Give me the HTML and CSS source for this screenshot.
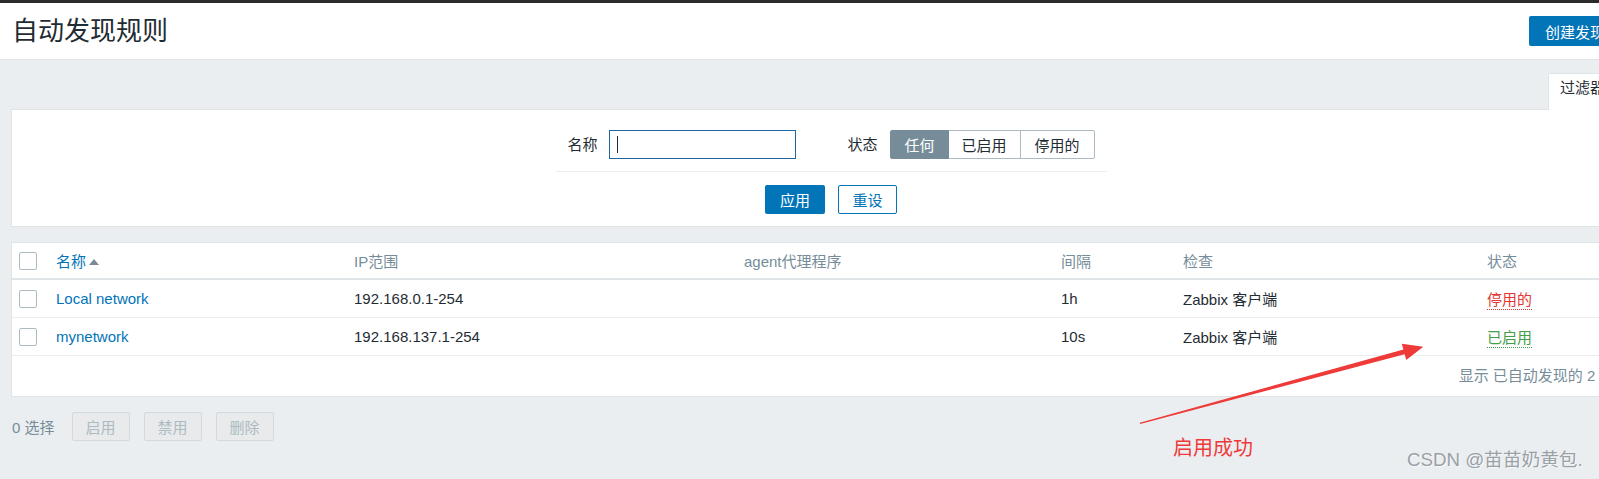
FILE: index.html
```html
<!DOCTYPE html>
<html lang="zh-CN">
<head>
    <meta charset="UTF-8">
    <title>自动发现规则</title>
    <link rel="stylesheet" href="styles.css">
</head>
<body>
    <div class="page">
        <div class="topbar"></div>
        <header class="page-header">
            <h1>自动发现规则</h1>
            <button class="btn-create">创建发现规则</button>
        </header>

        <main class="content">
            <div class="filter-tabs">
                <span class="filter-tab">过滤器</span>
            </div>
            <div class="filter-box">
                <div class="filter-row">
                    <div class="filter-field">
                        <label>名称</label>
                        <div class="text-input"><span class="caret"></span></div>
                    </div>
                    <div class="filter-field">
                        <label>状态</label>
                        <div class="radio-group">
                            <span class="radio selected">任何</span>
                            <span class="radio">已启用</span>
                            <span class="radio">停用的</span>
                        </div>
                    </div>
                </div>
                <div class="filter-buttons">
                    <button class="btn-apply">应用</button>
                    <button class="btn-reset">重设</button>
                </div>
            </div>

            <div class="list-box">
                <table class="list-table">
                    <colgroup>
                        <col style="width: 36px">
                        <col style="width: 298px">
                        <col style="width: 390px">
                        <col style="width: 317px">
                        <col style="width: 122px">
                        <col style="width: 304px">
                        <col>
                    </colgroup>
                    <thead>
                        <tr>
                            <th class="cell-check"><span class="checkbox"></span></th>
                            <th><a class="sort-link">名称</a><span class="sort-arrow"></span></th>
                            <th>IP范围</th>
                            <th>agent代理程序</th>
                            <th>间隔</th>
                            <th>检查</th>
                            <th>状态</th>
                        </tr>
                    </thead>
                    <tbody>
                        <tr>
                            <td class="cell-check"><span class="checkbox"></span></td>
                            <td><a class="link">Local network</a></td>
                            <td>192.168.0.1-254</td>
                            <td></td>
                            <td>1h</td>
                            <td>Zabbix 客户端</td>
                            <td><span class="status red">停用的</span></td>
                        </tr>
                        <tr>
                            <td class="cell-check"><span class="checkbox"></span></td>
                            <td><a class="link">mynetwork</a></td>
                            <td>192.168.137.1-254</td>
                            <td></td>
                            <td>10s</td>
                            <td>Zabbix 客户端</td>
                            <td><span class="status green">已启用</span></td>
                        </tr>
                    </tbody>
                </table>
                <div class="paging">显示 已自动发现的 2 中的 2</div>
            </div>

            <div class="actions">
                <span class="selected-count">0 选择</span>
                <button class="btn-disabled" disabled>启用</button>
                <button class="btn-disabled" disabled>禁用</button>
                <button class="btn-disabled" disabled>删除</button>
            </div>
        </main>
    </div>

    <!-- annotation drawn over the screenshot -->
    <svg class="annotation" width="1599" height="479" viewBox="0 0 1599 479">
        <polygon fill="#ef3a3a" points="1139.8,422.7 1403.4,349.5 1401.8,343.7 1423.3,346.7 1406.2,360.1 1404.7,354.3 1140.2,423.9"/>
    </svg>
    <div class="note">启用成功</div>
    <div class="watermark">CSDN @苗苗奶黄包.</div>
</body>
</html>
```

FILE: styles.css
```css
html {
    overflow: hidden;
}
body {
    margin: 0;
    width: 1599px;
    height: 479px;
    overflow: hidden;
    position: relative;
    background-color: #ebeef0;
    font-family: "Liberation Sans", "Noto Sans CJK SC", sans-serif;
    font-size: 15px;
    color: #1f2c33;
}
button {
    font-family: inherit;
    font-size: 15px;
}
.page {
    width: 1662px;
}
.topbar {
    height: 3px;
    background-color: #2b2b2b;
}
.page-header {
    display: flex;
    align-items: center;
    justify-content: space-between;
    height: 56px;
    padding: 0 11px 0 12px;
    background: white;
    border-bottom: 1px solid #dfe4e7;
}
.page-header h1 {
    margin: 0;
    font-size: 26px;
    font-weight: normal;
    line-height: 30px;
    color: #1f2c33;
}
.btn-create {
    height: 30px;
    padding: 0 16px;
    border: none;
    border-radius: 2px;
    background-color: #0275b8;
    color: white;
}
.content {
    padding: 13px 11px 0 11px;
}
.filter-tabs {
    display: flex;
    justify-content: flex-end;
}
.filter-tab {
    width: 79px;
    padding: 4px 11px 12px 11px;
    line-height: 20px;
    background: white;
    border: 1px solid #dfe4e7;
    border-bottom: none;
    margin-bottom: -1px;
    position: relative;
}
.filter-box {
    background: white;
    border: 1px solid #dfe4e7;
    padding: 20px 0 12px 0;
}
.filter-row {
    display: flex;
    justify-content: center;
    gap: 51px;
}
.filter-field {
    display: flex;
    align-items: center;
    gap: 12px;
}
.filter-field + .filter-field {
    gap: 13px;
}
.filter-field label {
    line-height: 20px;
}
.text-input {
    box-sizing: border-box;
    width: 187px;
    height: 29px;
    border: 1px solid #1f65a0;
    display: flex;
    align-items: center;
    padding-left: 7px;
}
.caret {
    width: 1px;
    height: 17px;
    background: #1f2c33;
}
.radio-group {
    display: flex;
    height: 29px;
}
.radio {
    box-sizing: border-box;
    display: flex;
    align-items: center;
    padding: 0 13px;
    border: 1px solid #acbbc2;
    margin-left: -1px;
}
.radio:first-child {
    border-radius: 2px 0 0 2px;
    margin-left: 0;
}
.radio:last-child {
    padding: 0 14px;
    border-radius: 0 2px 2px 0;
}
.radio.selected {
    background-color: #768d99;
    border-color: #768d99;
    color: white;
    position: relative;
}
.filter-buttons {
    width: 551px;
    margin: 12px auto 0 auto;
    padding-top: 13px;
    border-top: 1px solid #ebeef0;
    display: flex;
    justify-content: center;
    gap: 13px;
}
.btn-apply, .btn-reset {
    box-sizing: border-box;
    width: 60px;
    height: 29px;
    border-radius: 2px;
}
.btn-apply {
    border: none;
    background-color: #0275b8;
    color: white;
}
.btn-reset {
    width: 59px;
    background: white;
    border: 1px solid #0275b8;
    color: #0275b8;
}
.list-box {
    margin-top: 15px;
    background: white;
    border: 1px solid #dfe4e7;
}
.list-table {
    width: 100%;
    table-layout: fixed;
    border-collapse: collapse;
}
.list-table th {
    height: 35px;
    padding: 0 8px;
    text-align: left;
    font-weight: normal;
    color: #768d99;
    border-bottom: 2px solid #dfe4e7;
    white-space: nowrap;
}
.list-table td {
    height: 37px;
    padding: 0 8px;
    border-bottom: 1px solid #ebeef0;
    white-space: nowrap;
}
.list-table .cell-check {
    padding: 0 7px;
}
.checkbox {
    display: block;
    box-sizing: border-box;
    width: 18px;
    height: 18px;
    border: 1px solid #acbbc2;
    border-radius: 2px;
    background: white;
}
.sort-link, .link {
    color: #0275b8;
    text-decoration: none;
}
.sort-arrow {
    display: inline-block;
    margin-left: 3px;
    border-left: 5px solid transparent;
    border-right: 5px solid transparent;
    border-bottom: 6px solid #768d99;
    vertical-align: 2px;
}
.status {
    padding-bottom: 1px;
    border-bottom: 1px dotted;
}
.status.red {
    color: #e33734;
}
.status.green {
    color: #429e47;
}
.paging {
    height: 40px;
    line-height: 40px;
    text-align: right;
    padding-right: 8px;
    color: #768d99;
    white-space: nowrap;
}
.actions {
    display: flex;
    align-items: center;
    gap: 14px;
    margin-top: 15px;
}
.selected-count {
    color: #768d99;
    margin-left: 1px;
    margin-right: 3px;
}
.btn-disabled {
    box-sizing: border-box;
    width: 58px;
    height: 29px;
    border: 1px solid #d3d9dc;
    border-radius: 2px;
    background-color: #e8eaeb;
    color: #acbbc2;
}
.annotation {
    position: absolute;
    top: 0;
    left: 0;
    pointer-events: none;
}
.note {
    position: absolute;
    left: 1173px;
    top: 435px;
    font-size: 20px;
    line-height: 26px;
    color: #ef3a3a;
}
.watermark {
    position: absolute;
    left: 1407px;
    top: 448px;
    font-size: 18.7px;
    line-height: 24px;
    color: #9aa1a6;
    text-shadow: 1px 1px 0 rgba(255, 255, 255, 0.6);
}
```
